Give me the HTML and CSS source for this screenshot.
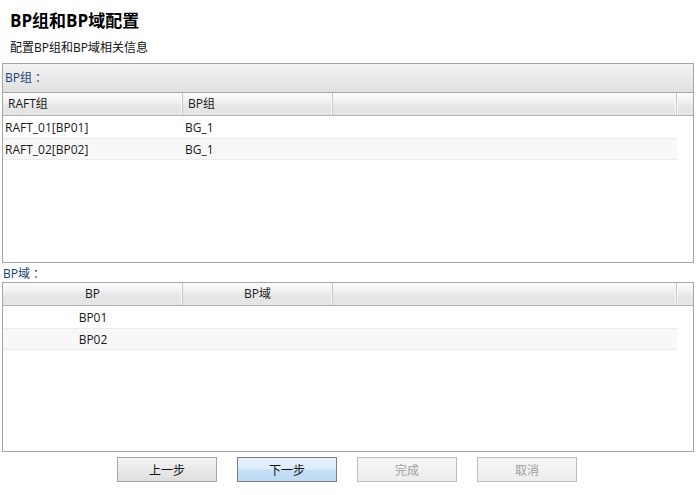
FILE: index.html
```html
<!DOCTYPE html>
<html lang="zh-CN">
<head>
<meta charset="utf-8">
<title>BP组和BP域配置</title>
<link rel="stylesheet" href="styles.css">
</head>
<body>
<div class="page">
  <div class="header">
    <h1 class="title">BP组和BP域配置</h1>
    <p class="subtitle">配置BP组和BP域相关信息</p>
  </div>

  <div class="panel panel-top">
    <div class="panel-head">BP组<span class="colon">：</span></div>
    <div class="thead">
      <div class="th c1">RAFT组</div>
      <div class="th c2">BP组</div>
      <div class="th c3"></div>
      <div class="th corner"></div>
    </div>
    <div class="tbody">
      <div class="tr"><div class="td c1">RAFT_01[BP01]</div><div class="td c2">BG_1</div><div class="td c3"></div></div>
      <div class="tr alt"><div class="td c1">RAFT_02[BP02]</div><div class="td c2">BG_1</div><div class="td c3"></div></div>
    </div>
  </div>

  <div class="label">BP域<span class="colon">：</span></div>

  <div class="panel panel-bottom">
    <div class="thead">
      <div class="th c1 center">BP</div>
      <div class="th c2 center">BP域</div>
      <div class="th c3"></div>
      <div class="th corner"></div>
    </div>
    <div class="tbody">
      <div class="tr"><div class="td c1 center">BP01</div><div class="td c2"></div><div class="td c3"></div></div>
      <div class="tr alt"><div class="td c1 center">BP02</div><div class="td c2"></div><div class="td c3"></div></div>
    </div>
  </div>

  <div class="buttons">
    <button class="btn">上一步</button>
    <button class="btn primary">下一步</button>
    <button class="btn disabled">完成</button>
    <button class="btn disabled">取消</button>
  </div>
</div>
</body>
</html>
```
FILE: styles.css
```css
html, body {
  margin: 0;
  padding: 0;
  background: #ffffff;
}
body {
  font-family: "Open Sans", "Noto Sans CJK SC", sans-serif;
  font-size: 12px;
  color: #1a1a1a;
}
.page {
  width: 698px;
  height: 495px;
  padding: 0 4px 0 2px;
  box-sizing: border-box;
}
.header {
  height: 63px;
  padding: 10px 0 0 8px;
  box-sizing: border-box;
}
.title {
  margin: 0;
  font-size: 17px;
  font-weight: bold;
  line-height: 22px;
  color: #000;
  font-family: "Open Sans", "Noto Sans CJK SC", sans-serif;
}
.subtitle {
  margin: 7px 0 0 0;
  line-height: 17px;
  font-size: 12px;
  color: #111;
}
.panel {
  border: 1px solid #a6a6a6;
  box-sizing: border-box;
  background: #fff;
}
.panel-top {
  height: 200px;
}
.panel-bottom {
  height: 170px;
}
.panel-head {
  height: 28px;
  line-height: 27px;
  padding-left: 2px;
  border-bottom: 1px solid #a6a6a6;
  background: linear-gradient(#f3f3f3, #e0e0e0);
  color: #1a3f7a;
}
.colon {
  display: inline-block;
  width: 12px;
  text-align: center;
  font-feature-settings: "halt";
}
.thead {
  display: flex;
  height: 23px;
  box-sizing: border-box;
  border-bottom: 1px solid #b4b4b4;
  background: linear-gradient(#fbfbfb 0%, #f2f2f2 35%, #e6e6e6 60%, #e4e4e4 100%);
}
.th {
  height: 100%;
  line-height: 22px;
  box-sizing: border-box;
  border-right: 1px solid #c6c6c6;
  box-shadow: inset -1px 0 0 #fafafa;
  padding-left: 5px;
  color: #1a1a1a;
}
.c1 { width: 180px; flex: none; }
.c2 { width: 150px; flex: none; }
.c3 { flex: 1; }
.corner {
  width: 16px;
  flex: none;
  border-right: none;
  border-left: 1px solid #fafafa;
  box-shadow: none;
}
.th.center, .td.center {
  text-align: center;
  padding-left: 0;
}
.tbody {
  width: 674px;
}
.tr {
  display: flex;
  height: 22px;
  box-sizing: border-box;
}
.tr.alt {
  background: #f8f8f8;
  border-top: 1px solid #ececec;
  border-bottom: 1px solid #ececec;
}
.td {
  line-height: 21px;
  padding-top: 1px;
  padding-left: 2px;
  box-sizing: border-box;
  white-space: nowrap;
  color: #1a1a1a;
}
.tr.alt .td {
  line-height: 20px;
  padding-top: 1px;
}
.label {
  height: 19px;
  line-height: 21px;
  padding-left: 1px;
  color: #1a3f7a;
}
.buttons {
  display: flex;
  justify-content: center;
  gap: 20px;
  margin-top: 5px;
  padding-right: 2px;
}
.btn {
  width: 100px;
  height: 25px;
  box-sizing: border-box;
  border: 1px solid #a6a6a6;
  background: linear-gradient(#f4f4f4, #dedede);
  font-family: "Open Sans", "Noto Sans CJK SC", sans-serif;
  font-size: 12px;
  color: #111;
  padding: 0;
  border-radius: 0;
}
.btn.primary {
  border-color: #7c7c7c;
  background: linear-gradient(#ebf4fc 0%, #dcecfc 45%, #c4dff6 55%, #bcdaf4 100%);
}
.btn.disabled {
  border-color: #bdbdbd;
  background: linear-gradient(#f6f6f6, #ececec);
  color: #a0a0a0;
}
```
